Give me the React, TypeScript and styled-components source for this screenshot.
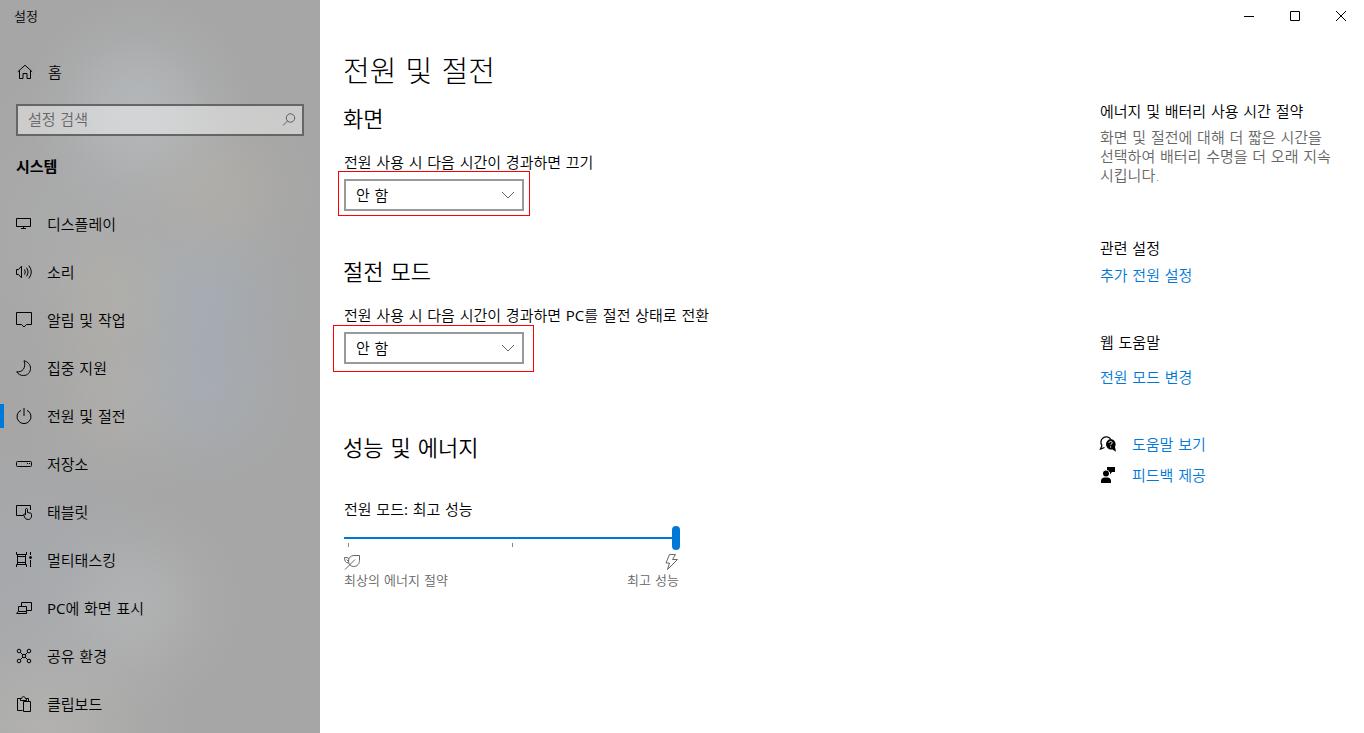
import React, { useState } from "react";
import styled, { createGlobalStyle } from "styled-components";

const GlobalStyle = createGlobalStyle`
  *, *::before, *::after { box-sizing: border-box; }
  body {
    margin: 0;
    background: #fff;
    color: #000;
    font-family: "DejaVu Sans", "Noto Sans CJK KR", sans-serif;
    font-size: 15px;
    font-weight: 350;
    line-height: 20px;
  }
  h1, h2, h3, p, ul { margin: 0; padding: 0; font-weight: 350; }
  ul { list-style: none; }
  button, input, select { font: inherit; color: inherit; }
`;

const Window = styled.div`
  display: flex;
  min-height: 100vh;
`;

const glow = (x: number, y: number, rgb: string, alpha: number, r: number) =>
  `radial-gradient(circle at ${x}px ${y}px, rgba(${rgb}, ${alpha}), rgba(${rgb}, ${alpha * 0.75}) ${r * 0.3}px, rgba(${rgb}, ${alpha * 0.25}) ${r * 0.65}px, rgba(${rgb}, 0) ${r}px)`;

const Sidebar = styled.aside`
  flex: 0 0 320px;
  background:
    ${[
      glow(138, 110, "188, 194, 198", 0.6, 115),
      glow(215, 190, "184, 180, 170", 0.45, 105),
      glow(206, 295, "164, 176, 190", 0.5, 105),
      glow(206, 390, "166, 176, 190", 0.5, 105),
      glow(122, 300, "184, 180, 168", 0.45, 105),
      glow(122, 400, "184, 181, 175", 0.45, 105),
      glow(135, 605, "184, 185, 186", 0.6, 110),
      glow(40, 570, "166, 172, 180", 0.5, 150),
      glow(45, 725, "184, 183, 180", 0.65, 150),
      glow(90, 230, "176, 178, 180", 0.4, 180),
    ].join(",\n    ")},
    #a6a6a6;
`;

const AppName = styled.div`
  height: 32px;
  padding: 1px 0 0 14px;
  font-size: 13px;
  line-height: 32px;
`;

const Label = styled.span`
  padding-top: 2px;
`;

const Latin = styled.span`
  font-family: "Open Sans", sans-serif;
  font-weight: 400;
  line-height: 1;
`;

const HomeLink = styled.a`
  display: flex;
  align-items: center;
  gap: 15px;
  height: 40px;
  margin-top: 20px;
  padding-left: 17px;
  color: #000;
  text-decoration: none;
`;

const SearchBox = styled.label`
  display: flex;
  align-items: center;
  height: 32px;
  margin: 12px 16px 0;
  padding: 0 5px 0 10px;
  border: 2px solid #666;
  background: rgba(255, 255, 255, 0.42);
  color: #5c5c5c;
`;

const SearchInput = styled.input`
  flex: 1;
  min-width: 0;
  padding: 0;
  border: 0;
  outline: 0;
  background: none;
  &::placeholder { color: #666; opacity: 1; }
`;

const GroupTitle = styled.h2`
  margin: 21px 16px 23px;
  font-size: 15px;
  font-weight: 700;
  line-height: 20px;
`;

const NavLink = styled.a<{ $active?: boolean }>`
  position: relative;
  display: flex;
  align-items: center;
  gap: 15px;
  height: 48px;
  padding-left: 16px;
  color: #000;
  text-decoration: none;
  &::before {
    content: "";
    position: absolute;
    left: 0;
    width: 4px;
    height: 24px;
    background: ${(p) => (p.$active ? "#0078d7" : "transparent")};
  }
`;

const Icon = styled.svg`
  flex: none;
  display: block;
  width: 16px;
  height: 16px;
  overflow: visible;
  fill: none;
  stroke: currentColor;
  stroke-width: 1;
`;

const Main = styled.main`
  flex: 1;
  min-width: 0;
`;

const Caption = styled.div`
  display: flex;
  justify-content: flex-end;
  height: 32px;
`;

const CaptionButton = styled.button`
  display: flex;
  align-items: center;
  justify-content: center;
  width: 46px;
  padding: 0;
  border: 0;
  background: none;
`;

const Columns = styled.div`
  display: flex;
  align-items: flex-start;
  justify-content: space-between;
  padding: 0 28px 24px 24px;
`;

const Content = styled.div`
  flex: 1;
  min-width: 0;
  padding-top: 20px;
`;

const PageTitle = styled.h1`
  margin: 0 0 14px -1px;
  font-size: 29px;
  font-weight: 300;
  line-height: 40px;
`;

const Section = styled.section<{ $space: number }>`
  margin-bottom: ${(p) => p.$space}px;
`;

const SectionTitle = styled.h2<{ $space?: number }>`
  margin: 0 0 ${(p) => p.$space ?? 19}px -1px;
  font-size: 22px;
  line-height: 28px;
`;

const FieldLabel = styled.label`
  display: block;
  margin-bottom: 6px;
`;

const SelectWrap = styled.div`
  position: relative;
  width: 180px;
  height: 32px;
`;

const Select = styled.select`
  appearance: none;
  display: block;
  width: 100%;
  height: 100%;
  padding: 2px 32px 0 10px;
  border: 2px solid #999;
  border-radius: 0;
  background: #fff;
`;

const Chevron = styled(Icon)`
  position: absolute;
  top: 8px;
  right: 8px;
  color: #666;
  pointer-events: none;
`;

const Highlight = styled.span<{ $inset: string }>`
  position: absolute;
  inset: ${(p) => p.$inset};
  border: 1px solid #f00;
  pointer-events: none;
`;

const SliderBlock = styled.div`
  width: 336px;
`;

const Range = styled.input`
  appearance: none;
  display: block;
  width: 100%;
  height: 24px;
  margin: 0;
  background: linear-gradient(#0078d7, #0078d7) center / 100% 2px no-repeat,
    linear-gradient(#888, #888) 4px 17px / 1px 4px no-repeat,
    linear-gradient(#888, #888) 168px 17px / 1px 4px no-repeat;
  &::-webkit-slider-thumb {
    appearance: none;
    width: 8px;
    height: 24px;
    border-radius: 4px;
    background: #0078d7;
  }
`;

const SliderEnds = styled.div`
  display: flex;
  justify-content: space-between;
  margin-top: 4px;
  padding-right: 1px;
  color: #666;
  font-size: 13px;
  line-height: 20px;
`;

const SliderEnd = styled.div<{ $end?: boolean }>`
  display: flex;
  flex-direction: column;
  gap: 1px;
  align-items: ${(p) => (p.$end ? "flex-end" : "flex-start")};
`;

const Side = styled.aside`
  flex: 0 0 236px;
  padding-top: 70px;
`;

const SideSection = styled.section<{ $gap: number; $space: number }>`
  display: flex;
  flex-direction: column;
  align-items: flex-start;
  gap: ${(p) => p.$gap}px;
  margin-bottom: ${(p) => p.$space}px;
`;

const SideTitle = styled.h3`
  font-size: 15px;
  line-height: 20px;
`;

const Description = styled.p`
  color: #666;
  line-height: 19px;
`;

const Link = styled.a`
  color: #0078d7;
  text-decoration: none;
`;

const HelpRow = styled.div`
  display: flex;
  align-items: center;
  gap: 16px;
  height: 20px;
  margin-bottom: 11px;
`;

const icons: Record<string, React.ReactNode> = {
  display: <path d="M.5 2.5h14v8H.5zM7.5 10.5v2M5 12.5h5" />,
  sound: (
    <path d="M.5 5.500h2L5.500 2.200v11.600l-3-3.300h-2zM8.500 5.500q1.600 2.500 0 5M10.700 3.600q3 4.400 0 8.800M12.900 1.600q4.800 6.400 0 12.800" />
  ),
  notice: <path d="M.5.5h15v12h-5L8 15l-2.500-2.500h-5z" />,
  moon: <path d="M8 .7C12 2 14.500 4.600 14.500 8.300c0 4.200-3 7.200-7 7.200-3 0-5.500-1.300-6.800-3.700C6 12.600 10.600 8 8 .7z" />,
  power: <path d="M5 2.300a7 7 0 1 0 6 0M8 0v8" />,
  storage: (
    <>
      <rect x=".5" y="5.500" width="15" height="5" rx="1" />
      <path d="M11 7.500h1M13 7.500h1" />
    </>
  ),
  tablet: (
    <path d="M7.500 11.500h-7v-10h14V6M9.500 11V5.500c0-1.300 2-1.300 2 0v3l3 .6c.8.200 1 .6 1 1.200v1.700c0 2-1.300 3.500-3.200 3.500-2 0-3-.8-3.800-2.500L7.600 10.500c.6-.9 1.400-.4 1.900.5" />
  ),
  multitask: (
    <>
      <path d="M.5 0v2.500h10V0M1.500 2.500v10M9.500 2.500v10M1.500 4.500h8M1.500 10.500h8M.5 15v-2.500h10V15M14.500 0v3M14.500 8v7" />
      <circle cx="14.500" cy="5.500" r="1" fill="currentColor" />
    </>
  ),
  project: <path d="M5.500 6V2.500h10v8h-5M2.500 6.500h8v5h-8zM2 11.500L.7 13.500h10l-.2-2" />,
  share: (
    <>
      <circle cx="3" cy="3" r="1.800" />
      <circle cx="13" cy="3" r="1.800" />
      <circle cx="3" cy="13" r="1.800" />
      <circle cx="13" cy="13" r="1.800" />
      <path d="M4.300 4.300l2.500 2.500M11.700 4.300L9.200 6.800M4.300 11.700l2.500-2.500M11.700 11.700L9.200 9.200M6.500 6.500h3v3h-3z" />
    </>
  ),
  clipboard: (
    <path d="M6.500 14.500h-5v-12h3M10.500 2.500h2v3M4.500 4.500v-2h1.200c0-2.500 3.600-2.500 3.600 0h1.200v2zM7.500 5.500h7v10h-7z" />
  ),
};

const navItems: [string, React.ReactNode][] = [
  ["display", "디스플레이"],
  ["sound", "소리"],
  ["notice", "알림 및 작업"],
  ["moon", "집중 지원"],
  ["power", "전원 및 절전"],
  ["storage", "저장소"],
  ["tablet", "태블릿"],
  ["multitask", "멀티태스킹"],
  ["project", <><Latin>PC</Latin>에 화면 표시</>],
  ["share", "공유 환경"],
  ["clipboard", "클립보드"],
];

function TimeoutSelect({ id, inset }: { id: string; inset: string }) {
  return (
    <SelectWrap>
      <Select id={id} defaultValue="never">
        <option value="never">안 함</option>
        <option value="10">10분</option>
        <option value="30">30분</option>
      </Select>
      <Chevron viewBox="0 0 16 16" aria-hidden="true">
        <path d="M2 5l6 6 6-6" />
      </Chevron>
      <Highlight $inset={inset} />
    </SelectWrap>
  );
}

export default function App() {
  const [mode, setMode] = useState(2);
  return (
    <>
      <GlobalStyle />
      <Window>
        <Sidebar>
          <AppName>설정</AppName>
          <HomeLink href="#home">
            <Icon viewBox="0 0 16 16" aria-hidden="true">
              <path d="M.8 7.800L8 1.200l7.200 6.600M2.500 6.500v8h3.500v-5h4v5h3.500v-8" />
            </Icon>
            <Label>홈</Label>
          </HomeLink>
          <SearchBox>
            <SearchInput type="text" placeholder="설정 검색" aria-label="설정 검색" />
            <Icon viewBox="0 0 16 16" aria-hidden="true">
              <circle cx="9.500" cy="6" r="4.200" />
              <path d="M6.500 9L2 13.500" />
            </Icon>
          </SearchBox>
          <GroupTitle>시스템</GroupTitle>
          <nav>
            <ul>
              {navItems.map(([icon, label]) => (
                <li key={icon}>
                  <NavLink href={`#${icon}`} $active={icon === "power"}>
                    <Icon viewBox="0 0 16 16" aria-hidden="true">{icons[icon]}</Icon>
                    <Label>{label}</Label>
                  </NavLink>
                </li>
              ))}
            </ul>
          </nav>
        </Sidebar>
        <Main>
          <Caption>
            <CaptionButton aria-label="최소화">
              <Icon viewBox="0 0 16 16"><path d="M3 8.500h10" /></Icon>
            </CaptionButton>
            <CaptionButton aria-label="최대화">
              <Icon viewBox="0 0 16 16"><path d="M3.500 3.500h9v9h-9z" /></Icon>
            </CaptionButton>
            <CaptionButton aria-label="닫기">
              <Icon viewBox="0 0 16 16"><path d="M3 3l10 10M13 3L3 13" /></Icon>
            </CaptionButton>
          </Caption>
          <Columns>
            <Content>
              <PageTitle>전원 및 절전</PageTitle>
              <Section $space={48}>
                <SectionTitle>화면</SectionTitle>
                <FieldLabel htmlFor="screen">전원 사용 시 다음 시간이 경과하면 끄기</FieldLabel>
                <TimeoutSelect id="screen" inset="-8px -6px -5px -6px" />
              </Section>
              <Section $space={71}>
                <SectionTitle>절전 모드</SectionTitle>
                <FieldLabel htmlFor="sleep">
                  전원 사용 시 다음 시간이 경과하면 <Latin>PC</Latin>를 절전 상태로 전환
                </FieldLabel>
                <TimeoutSelect id="sleep" inset="-7px -10px -8px -11px" />
              </Section>
              <Section $space={0}>
                <SectionTitle $space={37}>성능 및 에너지</SectionTitle>
                <FieldLabel htmlFor="mode">전원 모드<Latin>:</Latin> 최고 성능</FieldLabel>
                <SliderBlock>
                  <Range
                    id="mode"
                    type="range"
                    min={0}
                    max={2}
                    value={mode}
                    onChange={(e) => setMode(Number(e.target.value))}
                  />
                  <SliderEnds>
                    <SliderEnd>
                      <Icon viewBox="0 0 16 16" aria-hidden="true">
                        <path d="M15.500 1.500H10C6.500 1.500 4.500 4 4.500 7c0 3 2 5.500 5 5.500 4 0 6-3 6-6zM1 15.500L11 5.500M4.500 9C1.500 9 .5 7 .5 3.500c2 0 3.500 0 4.500 1.200M2.500 5.500l2 2" />
                      </Icon>
                      최상의 에너지 절약
                    </SliderEnd>
                    <SliderEnd $end>
                      <Icon viewBox="0 0 16 16" aria-hidden="true">
                        <path d="M6.500.5h6l-3 5h5L4.500 15.500l2-6.500h-3.500z" />
                      </Icon>
                      최고 성능
                    </SliderEnd>
                  </SliderEnds>
                </SliderBlock>
              </Section>
            </Content>
            <Side>
              <SideSection $gap={7} $space={53}>
                <SideTitle>에너지 및 배터리 사용 시간 절약</SideTitle>
                <Description>
                  화면 및 절전에 대해 더 짧은 시간을 선택하여 배터리 수명을 더 오래 지속시킵니다.
                </Description>
              </SideSection>
              <SideSection $gap={7} $space={47}>
                <SideTitle>관련 설정</SideTitle>
                <Link href="#advanced">추가 전원 설정</Link>
              </SideSection>
              <SideSection $gap={15} $space={46}>
                <SideTitle>웹 도움말</SideTitle>
                <Link href="#change-mode">전원 모드 변경</Link>
              </SideSection>
              <HelpRow>
                <Icon viewBox="0 0 16 16" aria-hidden="true">
                  <path d="M2 9.500A5.300 5.300 0 1 1 10.500 3M2 9.500L.5 13l4-1.500" strokeWidth="1.3" />
                  <path
                    d="M10.500 3a5.300 5.300 0 0 1 4.500 7.800l1 4.900-3.500-2.300A5.300 5.300 0 1 1 10.500 3z"
                    fill="currentColor"
                    stroke="none"
                  />
                  <path d="M9 6.900c0-2 3.200-2 3.200 0 0 1.100-1.600 1.100-1.600 2.300M10.600 10.400v1.200" stroke="#fff" />
                </Icon>
                <Label as={Link} href="#help">도움말 보기</Label>
              </HelpRow>
              <HelpRow>
                <Icon viewBox="0 0 16 16" aria-hidden="true">
                  <path
                    d="M7 0h8v5h-3l-2 2.500V5H9.500A3 3 0 0 0 7 3zM1 16v-2c0-2 1.600-3.500 3.500-3.500h3c1.900 0 3.500 1.500 3.500 3.500v2zM6 3.500a3 3 0 1 1 0 6 3 3 0 0 1 0-6z"
                    fill="currentColor"
                    stroke="none"
                  />
                </Icon>
                <Label as={Link} href="#feedback">피드백 제공</Label>
              </HelpRow>
            </Side>
          </Columns>
        </Main>
      </Window>
    </>
  );
}
